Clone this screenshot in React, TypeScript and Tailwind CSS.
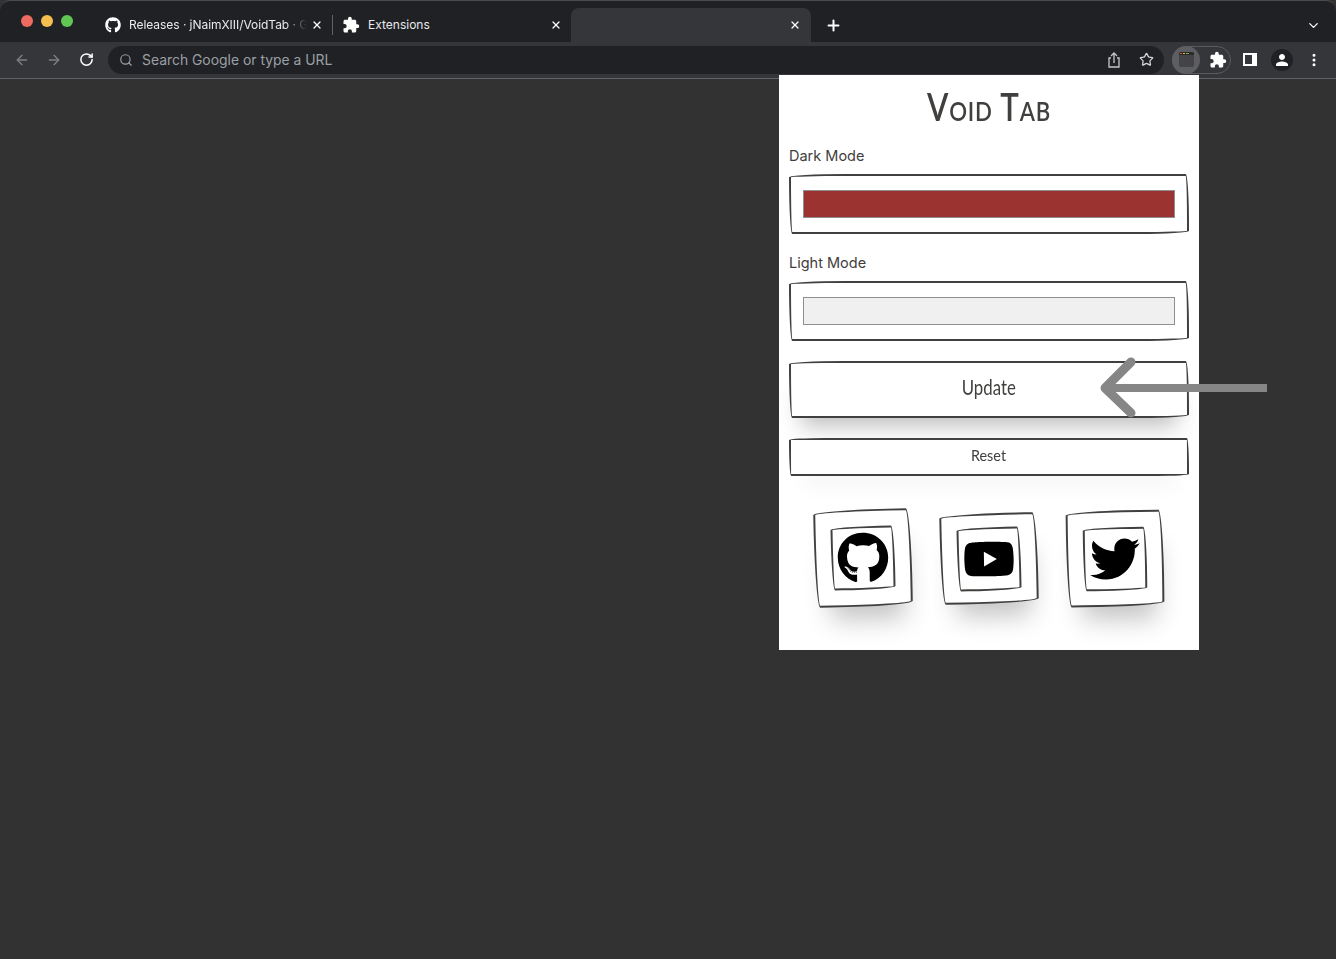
import { ArrowLeft, ArrowRight, ChevronDown, MoreVertical, Plus, RotateCw, Search, Star, X } from 'lucide-react'
import { FaGithub, FaTwitter, FaYoutube } from 'react-icons/fa'
import { MdExtension, MdPerson } from 'react-icons/md'

const sketch = 'border-2 border-[#41403e] rounded-[255px_15px_225px_15px/15px_225px_15px_255px]'

function SwatchField({ label, fill }: { label: string; fill: string }) {
  return (
    <div className="flex flex-col">
      <div className="h-[22px] text-[14.5px] leading-[22px] text-[#41403e]">{label}</div>
      <div className={`mt-[7px] h-[60px] w-[400px] bg-white px-[12px] pt-[14px] ${sketch}`}>
        <div className={`h-[28px] w-full border border-[#8f8f8f] ${fill}`} />
      </div>
    </div>
  )
}

function SocialBox({ children, height, tilt }: { children: React.ReactNode; height: string; tilt: string }) {
  return (
    <div className={`flex w-[98px] items-center justify-center bg-white shadow-[4px_24px_26px_-12px_rgba(0,0,0,0.24)] ${height} ${tilt} ${sketch}`}>
      <div className={`flex h-[64px] w-[64px] items-center justify-center text-black ${sketch}`}>{children}</div>
    </div>
  )
}

function Popup() {
  return (
    <div className="absolute right-[137px] top-[-4px] z-10 flex h-[575px] w-[420px] flex-col bg-white px-[10px] font-['Inter',sans-serif]">
      <h1 className="mt-[8px] h-[46px] scale-x-[0.82] text-center font-['Lato',sans-serif] text-[38px] leading-[46px] font-semibold tracking-[1px] text-[#41403e] [font-variant:small-caps]">
        Void Tab
      </h1>
      <div className="mt-[16px] flex flex-col gap-[18px]">
        <SwatchField label="Dark Mode" fill="bg-[#9b3330]" />
        <SwatchField label="Light Mode" fill="bg-[#f0f0f0]" />
      </div>
      <button className={`mt-[20px] h-[57px] w-[400px] bg-white pb-[5px] font-['Lato',sans-serif] text-[21px] text-[#41403e] shadow-[0_20px_22px_-12px_rgba(0,0,0,0.26)] ${sketch}`}>
        <span className="inline-block scale-x-[0.8]">Update</span>
      </button>
      <button className={`mt-[20px] h-[38px] w-[400px] bg-white pb-[4px] font-['Lato',sans-serif] text-[16px] text-[#41403e] shadow-[0_20px_22px_-14px_rgba(0,0,0,0.08)] ${sketch}`}>
        <span className="inline-block scale-x-[0.9]">Reset</span>
      </button>
      <div className="mt-[33px] flex items-center justify-center gap-[28px]">
        <SocialBox height="h-[98px]" tilt="-rotate-1">
          <FaGithub size={52} />
        </SocialBox>
        <SocialBox height="h-[91px]" tilt="-rotate-1">
          <FaYoutube size={52} />
        </SocialBox>
        <SocialBox height="h-[97px]" tilt="rotate-[-0.5deg]">
          <FaTwitter size={50} />
        </SocialBox>
      </div>
      {/* annotation arrow over the update button */}
      <svg className="absolute left-[315px] top-[280px]" width="180" height="64" viewBox="0 0 180 64" fill="none">
        <path d="M12 33 H173" stroke="#868686" strokeWidth="8" />
        <path d="M37 7 L11 33 L37 58" stroke="#868686" strokeWidth="9" strokeLinecap="round" strokeLinejoin="round" />
      </svg>
    </div>
  )
}

export default function App() {
  return (
    <div className="flex h-[959px] w-[1336px] flex-col overflow-hidden bg-[#323232] font-['Inter',sans-serif]">
      {/* Tab strip */}
      <div className="flex h-[42px] items-end rounded-t-[10px] border-t border-[#4a4b4f] bg-[#202124] text-[12px] text-[#e8eaed]">
        <div className="flex h-[33px] w-[89px] items-start gap-[8px] pl-[21px] pt-[6px]">
          <span className="h-[12px] w-[12px] rounded-full bg-[#ed6a5e]" />
          <span className="h-[12px] w-[12px] rounded-full bg-[#f4bf4f]" />
          <span className="h-[12px] w-[12px] rounded-full bg-[#61c554]" />
        </div>
        <div className="flex h-[33px] w-[243px] shrink-0 items-center pb-[1px] pl-[16px]">
          <FaGithub size={16} className="shrink-0 text-white" />
          <span className="ml-[8px] w-[178px] shrink-0 whitespace-nowrap tracking-[-0.05px] [mask-image:linear-gradient(to_right,black_88%,rgba(0,0,0,0.25)_97%,transparent)]">
            Releases · jNaimXIII/VoidTab · G
          </span>
          <X size={12} strokeWidth={2.5} className="ml-[4px] shrink-0 text-white" />
          <span className="ml-[9px] h-[20px] w-px shrink-0 bg-[#5f6368]" />
        </div>
        <div className="flex h-[33px] w-[239px] shrink-0 items-center pb-[1px] pl-[10px] pr-[9px]">
          <MdExtension size={18} className="shrink-0 text-white" />
          <span className="ml-[8px] flex-1">Extensions</span>
          <X size={12} strokeWidth={2.5} className="text-white" />
        </div>
        <div className="flex h-[34px] w-[240px] shrink-0 items-center justify-end rounded-t-[8px] bg-[#35363a] pr-[10px]">
          <X size={12} strokeWidth={2.5} className="text-white" />
        </div>
        <div className="flex h-[33px] w-[44px] items-center justify-center pb-[1px]">
          <Plus size={17} strokeWidth={2.8} className="text-white" />
        </div>
        <div className="flex h-[33px] flex-1 items-center justify-end pb-[1px] pr-[15px]">
          <ChevronDown size={15} strokeWidth={2} className="text-white" />
        </div>
      </div>

      {/* Toolbar */}
      <div className="flex h-[37px] items-center border-b border-[#5f6368] bg-[#35363a] pb-[1px]">
        <div className="flex w-[108px] items-center pl-[14px]">
          <ArrowLeft size={16} className="text-[#7d7f83]" />
          <ArrowRight size={16} className="ml-[16px] text-[#7d7f83]" />
          <RotateCw size={15} strokeWidth={2.4} className="ml-[17px] text-white" />
        </div>
        <div className="flex h-[28px] w-[1056px] items-center rounded-full bg-[#202124] pl-[11px] pr-[10px] text-[13.9px] text-[#9aa0a6]">
          <Search size={14} className="text-[#9aa0a6]" />
          <span className="ml-[9px] flex-1 pt-[1px] leading-[20px]">Search Google or type a URL</span>
          <svg width="14" height="16" viewBox="0 0 14 16" fill="none" stroke="#c4c7c9" strokeWidth="1.3">
            <path d="M4 6 H2 V15 H12 V6 H10" />
            <path d="M7 11 V1 M4 4 L7 1 L10 4" />
          </svg>
          <Star size={15} strokeWidth={2} className="ml-[18px] text-[#d5d7d9]" />
        </div>
        <div className="ml-[8px] flex h-[28px] w-[59px] items-center rounded-full border border-[#5a5b5f]">
          <div className="flex h-[28px] w-[28px] -translate-x-px items-center justify-center rounded-full bg-[#5d5e61]">
            <div className="h-[15px] w-[15px] rounded-[2px] bg-[#444446]">
              <div className="flex h-[3px] items-center gap-px rounded-t-[2px] bg-[#2a2a2b] pl-[1px]">
                <span className="h-[1px] w-[2px] bg-[#e0533f]" />
                <span className="h-[1px] w-[2px] bg-[#e8b83e]" />
                <span className="h-[1px] w-[3px] bg-[#5dbb4b]" />
              </div>
            </div>
          </div>
          <MdExtension size={18} className="ml-[8px] text-white" />
        </div>
        <div className="ml-[12px] h-[13px] w-[14px] border-[2px] border-r-[5px] border-white" />
        <div className="ml-[14px] flex h-[22px] w-[22px] items-center justify-center rounded-full bg-[#202124]">
          <MdPerson size={18} className="text-white" />
        </div>
        <MoreVertical size={16} strokeWidth={2.5} className="ml-[13px] text-white" />
      </div>

      {/* Page */}
      <div className="relative flex-1 bg-[#323232]">
        <Popup />
      </div>
    </div>
  )
}
